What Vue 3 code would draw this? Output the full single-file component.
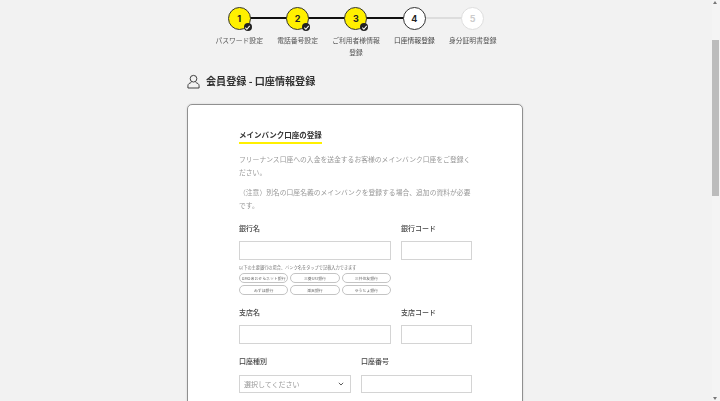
<script setup>
const steps = [
  { n: 1, label: 'パスワード設定', state: 'done' },
  { n: 2, label: '電話番号設定', state: 'done' },
  { n: 3, label: 'ご利用者様情報登録', state: 'done' },
  { n: 4, label: '口座情報登録', state: 'current' },
  { n: 5, label: '身分証明書登録', state: 'todo' }
]
const banks = ['GMOあおぞらネット銀行', '三菱UFJ銀行', '三井住友銀行', 'みずほ銀行', '楽天銀行', 'ゆうちょ銀行']
</script>

<template>
  <div class="page">
    <main class="main">
      <ol class="steps">
        <li v-for="s in steps" :key="s.n" class="step" :class="s.state">
          <div class="circle">
            {{ s.n }}
            <span v-if="s.state === 'done'" class="check">
              <svg width="7" height="7" viewBox="0 0 8 8"><path d="M1.5 4.2 3.3 6 6.5 2.2" fill="none" stroke="#fff" stroke-width="1.2"/></svg>
            </span>
          </div>
          <div class="step-label">{{ s.label }}</div>
        </li>
      </ol>

      <h1 class="title">
        <svg width="13" height="15" viewBox="0 0 14 16" fill="none" stroke="#333" stroke-width="1">
          <circle cx="7" cy="5" r="3.6"/>
          <path d="M1 15v-2.5C1 10.5 3 9.5 4.6 9.2M13 15v-2.5c0-2-2-3-3.6-3.3M1 15h12"/>
        </svg>
        <span>会員登録 - 口座情報登録</span>
      </h1>

      <section class="card">
        <h2 class="heading"><span>メインバンク口座の登録</span></h2>
        <p class="desc">フリーナンス口座への入金を送金するお客様のメインバンク口座をご登録ください。</p>
        <p class="desc second">（注意）別名の口座名義のメインバンクを登録する場合、追加の資料が必要です。</p>

        <div class="row first">
          <div class="grow">
            <div class="label">銀行名</div>
            <div class="input"></div>
            <div class="note">以下の主要銀行の場合、バンク名をタップで記載入力できます</div>
            <div class="chips">
              <span v-for="b in banks" :key="b" class="chip">{{ b }}</span>
            </div>
          </div>
          <div class="code">
            <div class="label">銀行コード</div>
            <div class="input"></div>
          </div>
        </div>

        <div class="row branch">
          <div class="grow">
            <div class="label">支店名</div>
            <div class="input"></div>
          </div>
          <div class="code">
            <div class="label">支店コード</div>
            <div class="input"></div>
          </div>
        </div>

        <div class="row account">
          <div class="type">
            <div class="label">口座種別</div>
            <div class="input select">
              <span>選択してください</span>
              <svg width="6" height="4" viewBox="0 0 7 5"><path d="M.8 1 3.5 3.8 6.2 1" fill="none" stroke="#555" stroke-width="1.2"/></svg>
            </div>
          </div>
          <div class="number">
            <div class="label">口座番号</div>
            <div class="input"></div>
          </div>
        </div>
      </section>
    </main>

    <aside class="scrollbar">
      <i class="arrow up"></i>
      <div class="thumb"></div>
      <i class="arrow down"></i>
    </aside>
  </div>
</template>

<style>
html, body { margin: 0; height: 100%; overflow: hidden; background: #f2f2f2; }
</style>

<style scoped>
.page {
  display: flex;
  width: 720px;
  height: 401px;
  overflow: hidden;
  background: #f2f2f2;
  font-family: "Noto Sans CJK JP", "Noto Sans", sans-serif;
  color: #333;
}
.main {
  flex: 1;
  display: flex;
  flex-direction: column;
  align-items: center;
  min-width: 0;
  filter: blur(0.6px);
}
.steps {
  display: flex;
  list-style: none;
  margin: 7px 0 0;
  padding: 0;
  width: 292px;
  height: 59px;
}
.step {
  position: relative;
  width: 58.4px;
  display: flex;
  flex-direction: column;
  align-items: center;
}
.step:not(:last-child)::after {
  content: "";
  position: absolute;
  top: 10px;
  left: 50%;
  width: 100%;
  height: 2px;
  background: #111;
}
.step.current::after { background: #ddd !important; }
.circle {
  position: relative;
  z-index: 1;
  box-sizing: border-box;
  width: 23px;
  height: 23px;
  border-radius: 50%;
  border: 1.5px solid #333;
  background: #fff000;
  display: flex;
  align-items: center;
  justify-content: center;
  font: 700 9px/1 Inter, "Noto Sans", sans-serif;
  color: #222;
}
.current .circle { background: #fff; }
.todo .circle { background: #fff; border-color: #ddd; color: #ccc; }
.check {
  position: absolute;
  right: -2px;
  bottom: -2px;
  width: 8px;
  height: 8px;
  border-radius: 50%;
  background: #222;
  display: flex;
  align-items: center;
  justify-content: center;
}
.step-label {
  margin-top: 4px;
  width: 50px;
  text-align: center;
  font-size: 6.8px;
  line-height: 12px;
  color: #555;
}
.current .step-label { color: #444; }
.title {
  align-self: flex-start;
  display: flex;
  align-items: center;
  gap: 6px;
  margin: 15px 0 0 187px;
  font-size: 10.1px;
  font-weight: 700;
  line-height: 16px;
  color: #333;
}
.card {
  box-sizing: border-box;
  align-self: flex-start;
  margin: 15px 0 0 187px;
  width: 336px;
  height: 340px;
  flex: none;
  padding: 24px 50px 0 51px;
  background: #fff;
  border: 1px solid #909090;
  border-radius: 5px;
  box-shadow: 0 0 2px rgba(0, 0, 0, .15);
}
.heading {
  margin: 0;
  font-size: 7.5px;
  font-weight: 700;
  line-height: 12px;
}
.heading span {
  display: inline-block;
  border-bottom: 2.5px solid #fff000;
  padding-bottom: 1px;
}
.desc {
  margin: 9px 0 0;
  font-size: 6.8px;
  line-height: 12.5px;
  color: #999;
}
.desc.second { margin-top: 8px; }
.row { display: flex; gap: 10px; }
.row.first { margin-top: 11px; }
.row.branch { margin-top: 11px; }
.row.account { margin-top: 11px; }
.grow { width: 152px; }
.code { width: 71px; }
.type { width: 112px; }
.number { width: 111px; }
.label {
  font-size: 7px;
  font-weight: 500;
  line-height: 12px;
  color: #444;
  margin-bottom: 7px;
}
.account .label { margin-bottom: 8px; }
.input {
  box-sizing: border-box;
  height: 19px;
  border: 1px solid #d4d4d4;
  background: #fff;
}
.account .input { height: 18px; }
.select {
  display: flex;
  align-items: center;
  justify-content: space-between;
  padding: 0 6px 0 4px;
  font-size: 7px;
  color: #999;
}
.note {
  margin-top: 3px;
  font-size: 4.2px;
  line-height: 8px;
  color: #777;
  white-space: nowrap;
}
.chips {
  display: grid;
  grid-template-columns: repeat(3, 1fr);
  gap: 2px;
  margin-top: 2px;
}
.chip {
  box-sizing: border-box;
  height: 10px;
  border: 1px solid #c4c4c4;
  border-radius: 5px;
  font-size: 3.9px;
  line-height: 8px;
  text-align: center;
  color: #666;
  white-space: nowrap;
}
.scrollbar {
  position: relative;
  flex: none;
  width: 8px;
  background: #f4f4f4;
}
.thumb {
  position: absolute;
  top: 40px;
  left: 0;
  width: 7px;
  height: 156px;
  background: #bcbcbc;
}
.arrow {
  position: absolute;
  left: 1px;
  width: 0;
  height: 0;
  border-left: 2.5px solid transparent;
  border-right: 2.5px solid transparent;
}
.arrow.up { top: 1px; border-bottom: 3px solid #777; }
.arrow.down { bottom: 1px; border-top: 3px solid #777; }
</style>
